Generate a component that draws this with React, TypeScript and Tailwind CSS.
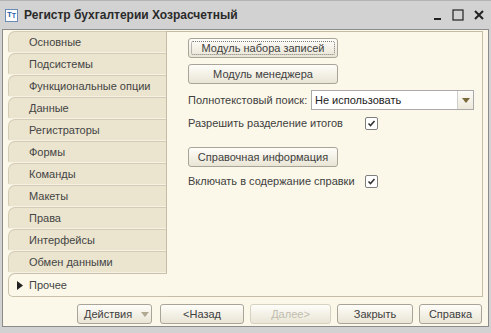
import React from "react";

const tabs = [
  "Основные",
  "Подсистемы",
  "Функциональные опции",
  "Данные",
  "Регистраторы",
  "Формы",
  "Команды",
  "Макеты",
  "Права",
  "Интерфейсы",
  "Обмен данными",
];

function Btn({ children, w, focused, disabled, className = "" }: { children: React.ReactNode; w: string; focused?: boolean; disabled?: boolean; className?: string }) {
  return (
    <div
      className={`${w} h-[20px] flex items-center justify-center rounded-[3px] border whitespace-nowrap ${disabled ? "border-[#d6d2c2] text-[#c0bcae]" : "border-[#a8a498] text-[#404040]"} bg-gradient-to-b from-[#fefdf9] to-[#e9e5d5] relative ${className}`}
    >
      {focused && <div className="absolute inset-[2px] border border-dotted border-[#7a7a7a] rounded-[2px]" />}
      <span className="relative">{children}</span>
    </div>
  );
}

function Check() {
  return (
    <div className="w-[13px] h-[13px] bg-white border border-[#7f7f7f] rounded-[2px] flex items-center justify-center">
      <svg width="9" height="9" viewBox="0 0 9 9">
        <path d="M1.5 4.5 L3.5 6.5 L7.5 2" stroke="#333" strokeWidth="1.6" fill="none" />
      </svg>
    </div>
  );
}

export default function App() {
  return (
    <div
      className="w-[491px] h-[333px] bg-[#d2d2d2] flex flex-col text-[11px] overflow-hidden"
      style={{ fontFamily: '"Liberation Sans", Arial, sans-serif' }}
    >
      {/* Title bar */}
      <div className="h-[29px] flex items-center pl-[5px] pr-[6px] border-t border-[#b4b4b4] shrink-0">
        <div className="w-[13px] h-[13px] bg-white border border-[#6a8bb8] flex items-center justify-center text-[8px] font-bold text-[#2a5ea8] leading-none">
          T<span className="text-[7px]">T</span>
        </div>
        <div className="ml-[6px] font-bold text-[12px] text-[#2a2a2a] whitespace-nowrap">Регистр бухгалтерии Хозрасчетный</div>
        <div className="flex-1" />
        <div className="flex items-center gap-[9px] text-[#222]">
          <svg width="10" height="12" viewBox="0 0 10 12">
            <rect x="1" y="9" width="7" height="2" fill="#222" />
          </svg>
          <svg width="12" height="12" viewBox="0 0 12 12">
            <rect x="1" y="1" width="10" height="10" fill="none" stroke="#222" strokeWidth="1.2" />
          </svg>
          <svg width="12" height="12" viewBox="0 0 12 12">
            <path d="M2 2 L10 10 M10 2 L2 10" stroke="#222" strokeWidth="2" />
          </svg>
        </div>
      </div>

      {/* Body */}
      <div className="flex-1 mx-[2px] mb-[6px] border border-[#8c8c8c] bg-[#fbf8e9] flex flex-col">
        <div className="flex pt-[1px] pr-[5px] pl-[5px]">
          {/* Tabs */}
          <div className="w-[158px] flex flex-col shrink-0">
            {tabs.map((t) => (
              <div
                key={t}
                className="h-[22px] flex items-center pl-[20px] bg-[#ebe4cf] border-l border-t border-[#d3cbb3] rounded-tl-[7px] rounded-bl-[3px] border-b border-b-[#f6f1e2] text-[#444] whitespace-nowrap"
              >
                {t}
              </div>
            ))}
            <div className="h-[24px] flex items-center pl-[8px] bg-[#fbf8e9] border-l border-t border-b border-[#c9c1a9] rounded-tl-[7px] rounded-bl-[5px] text-[#444] relative z-10 -mr-[1px]">
              <svg width="6" height="9" viewBox="0 0 6 9" className="mr-[6px]">
                <path d="M0 0 L6 4.5 L0 9 Z" fill="#222" />
              </svg>
              Прочее
            </div>
          </div>
          {/* Panel */}
          <div className="flex-1 border border-[#c4bca4] bg-[#fbf8e9] h-[266px] pl-[21px] pt-[6px] flex flex-col text-[#404040] whitespace-nowrap">
            <Btn w="w-[150px]" focused>Модуль набора записей</Btn>
            <Btn w="w-[150px]" className="mt-[6px]">Модуль менеджера</Btn>
            <div className="flex items-center mt-[6px] h-[20px]">
              <span className="w-[123px]">Полнотекстовый поиск:</span>
              <div className="w-[163px] h-[20px] bg-white border border-[#a9a9a9] flex items-center">
                <span className="pl-[3px] flex-1 text-[#222]">Не использовать</span>
                <div className="w-[16px] h-full border-l border-[#cfcfcf] bg-gradient-to-b from-[#fdfcf8] to-[#ece8da] flex items-center justify-center">
                  <svg width="8" height="5" viewBox="0 0 8 5">
                    <path d="M0 0 L8 0 L4 5 Z" fill="#7a6a3a" />
                  </svg>
                </div>
              </div>
            </div>
            <div className="flex items-center mt-[5px] h-[16px]">
              <span className="w-[177px]">Разрешить разделение итогов</span>
              <Check />
            </div>
            <Btn w="w-[150px]" className="mt-[16px]">Справочная информация</Btn>
            <div className="flex items-center mt-[6px] h-[16px]">
              <span className="w-[177px]">Включать в содержание справки</span>
              <Check />
            </div>
          </div>
        </div>
        {/* Footer */}
        <div className="flex items-center justify-end pr-[6px] pt-[7px] gap-[6px]">
          <div className="w-[75px] h-[20px] flex items-center rounded-[3px] border border-[#a8a498] bg-gradient-to-b from-[#fefdf9] to-[#e9e5d5] text-[#404040] pl-[6px] mr-[2px]">
            Действия
            <svg width="8" height="5" viewBox="0 0 8 5" className="ml-[9px]">
              <path d="M0 0 L8 0 L4 5 Z" fill="#b0a890" />
            </svg>
          </div>
          <Btn w="w-[84px]">&lt;Назад</Btn>
          <Btn w="w-[81px]" disabled>Далее&gt;</Btn>
          <Btn w="w-[76px]">Закрыть</Btn>
          <Btn w="w-[63px]">Справка</Btn>
        </div>
      </div>
    </div>
  );
}
